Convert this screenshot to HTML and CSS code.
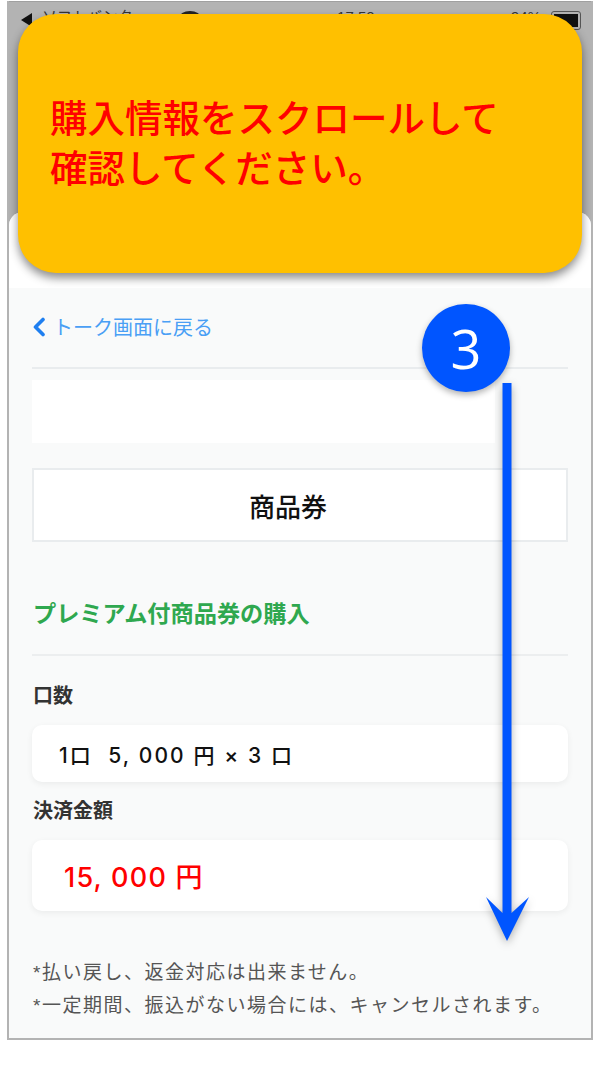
FILE: index.html
```html
<!DOCTYPE html>
<html lang="ja">
<head>
    <meta charset="UTF-8">
    <meta name="viewport" content="width=device-width, initial-scale=1.0">
    <title>購入情報の確認</title>
    <link rel="stylesheet" href="styles.css">
</head>
<body>

    <div class="phone">
        <!-- ステータスバー -->
        <div class="status-area">
            <div class="status-bar">
                <div class="status-group">
                    <span class="status-back"></span>
                    <span class="status-text">ソフトバンク</span>
                    <span class="status-signal"></span>
                </div>
                <span class="status-text">17:50</span>
                <div class="status-group">
                    <span class="status-text">94%</span>
                    <span class="status-battery"><span class="battery-level"></span></span>
                </div>
            </div>
        </div>

        <div class="sheet">
            <div class="sheet-head"></div>
            <div class="sheet-body">
                <a class="back-link">
                    <svg class="back-icon" viewBox="0 0 14 20" width="14" height="20"><path d="M11 2.5 L3.5 10 L11 17.5" fill="none" stroke="#1f7ff0" stroke-width="3.6" stroke-linecap="round" stroke-linejoin="round"/></svg>
                    <span>トーク画面に戻る</span>
                </a>
                <div class="blank-box"></div>
                <div class="shop-card">商品券</div>

                <h3 class="page-title">プレミアム付商品券の購入</h3>

                <div class="field-label first">口数</div>
                <div class="field-box count-box">1口&nbsp;&nbsp;5, 000 円 × 3 口</div>

                <div class="field-label second">決済金額</div>
                <div class="field-box total-box">15, 000 円</div>

                <p class="note first-note">*払い戻し、返金対応は出来ません。</p>
                <p class="note">*一定期間、振込がない場合には、キャンセルされます。</p>
            </div>
        </div>
    </div>

    <!-- 注釈 -->
    <div class="callout">購入情報をスクロールして<br>確認してください。</div>
    <svg class="arrow" viewBox="0 0 60 570" width="60" height="570">
        <path d="M25.5 0 H34.5 V530 L52 514 L30 558 L9 514 L25.5 530 Z" fill="#0055ff"/>
    </svg>
    <div class="step-badge">3</div>

</body>
</html>
```

FILE: styles.css
```css
body {
    margin: 0;
    font-family: "Liberation Sans", "Noto Sans CJK JP", sans-serif;
    background-color: #fff;
}
.phone {
    width: 582px;
    margin: 1px 0 0 7px;
    border: 2px solid #b3b3b3;
    border-top: none;
    background-color: #b3b3b3;
}
.status-area {
    height: 211px;
    border-top: 1px solid #a0a0a0;
    box-sizing: border-box;
}
.status-bar {
    display: flex;
    justify-content: space-between;
    align-items: flex-start;
    padding: 9px 10px 0 12px;
}
.status-group {
    display: flex;
    align-items: flex-start;
    gap: 10px;
}
.status-text {
    font-size: 15px;
    line-height: 12px;
    color: #333;
}
.status-signal {
    width: 22px;
    height: 14px;
    margin-left: 36px;
    border-radius: 50%;
    background-color: #222;
}
.status-back {
    width: 0;
    height: 0;
    margin-top: 2px;
    border-top: 7px solid transparent;
    border-bottom: 7px solid transparent;
    border-right: 11px solid #111;
}
.status-battery {
    width: 30px;
    height: 19px;
    padding: 2px;
    border: 1px solid #555;
    border-radius: 3px;
    box-sizing: border-box;
    display: flex;
}
.battery-level {
    flex: 1;
    background-color: #111;
}
.sheet {
    background-color: #f9fafa;
    border-radius: 14px 14px 0 0;
    overflow: hidden;
}
.sheet-head {
    height: 76px;
    background-color: #fff;
}
.sheet-body {
    padding: 28px 23px 16px 23px;
}
.back-link {
    display: flex;
    align-items: flex-start;
    gap: 7px;
    height: 54px;
    margin-top: -1px;
    box-sizing: border-box;
    border-bottom: 2px solid #e9ecee;
    font-size: 20px;
    color: #4a9ff5;
    line-height: 26px;
}
.back-icon {
    margin-top: 2px;
}
.blank-box {
    width: 463px;
    height: 63px;
    margin-top: 11px;
    background-color: #fff;
}
.shop-card {
    height: 74px;
    margin-top: 25px;
    padding-right: 24px;
    box-sizing: border-box;
    border: 2px solid #e9ecee;
    background-color: #fff;
    display: flex;
    align-items: center;
    justify-content: center;
    font-size: 26px;
    font-weight: 500;
    color: #111;
}
.page-title {
    margin: 0;
    padding: 56px 0 23px 1px;
    border-bottom: 2px solid #eceeef;
    font-size: 23.2px;
    line-height: 33px;
    font-weight: 700;
    color: #2fa84f;
}
.field-label {
    padding-left: 1px;
    font-size: 20px;
    line-height: 28px;
    font-weight: 700;
    color: #333;
    height: 29px;
}
.field-label.first {
    margin-top: 26px;
}
.field-label.second {
    margin-top: 15px;
}
.field-box {
    margin-top: 14px;
    background-color: #fff;
    border-radius: 10px;
    box-shadow: 0 2px 6px rgba(0, 0, 0, 0.06);
    display: flex;
    align-items: center;
    white-space: pre;
    font-family: Inter, "Noto Sans CJK JP", sans-serif;
    font-weight: 500;
}
.count-box {
    height: 57px;
    padding-left: 27px;
    font-size: 21px;
    letter-spacing: 2.1px;
    color: #111;
}
.total-box {
    height: 71px;
    padding-left: 32px;
    font-size: 27px;
    letter-spacing: 1.2px;
    color: #f00;
}
.note {
    margin: 0;
    padding-left: 1px;
    font-size: 19px;
    line-height: 33px;
    letter-spacing: 1.5px;
    color: #555;
}
.first-note {
    margin-top: 45px;
}
/* 注釈 */
.callout {
    position: absolute;
    left: 18px;
    top: 14px;
    width: 564px;
    height: 259px;
    box-sizing: border-box;
    padding: 80px 0 0 32px;
    background-color: #ffc000;
    border-radius: 38px;
    box-shadow: 0 5px 10px rgba(0, 0, 0, 0.45);
    font-size: 37.5px;
    font-weight: 500;
    line-height: 50px;
    color: #f00;
}
.arrow {
    position: absolute;
    left: 477px;
    top: 383px;
    filter: drop-shadow(0 3px 4px rgba(0, 0, 0, 0.3));
}
.step-badge {
    position: absolute;
    left: 422px;
    top: 304px;
    width: 88px;
    height: 88px;
    border-radius: 50%;
    background-color: #0055ff;
    box-shadow: 0 3px 6px rgba(0, 0, 0, 0.3);
    color: #fff;
    font-family: "Open Sans", sans-serif;
    font-size: 54px;
    display: flex;
    align-items: center;
    justify-content: center;
}
```
